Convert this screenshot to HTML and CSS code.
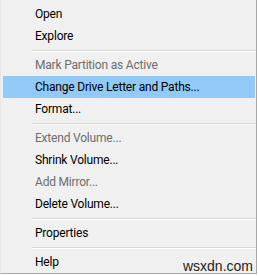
FILE: index.html
```html
<!DOCTYPE html>
<html lang="en">
<head>
    <meta charset="UTF-8">
    <title>Volume context menu</title>
    <link rel="stylesheet" href="styles.css">
</head>
<body>
    <div class="menu">
        <div class="menu-item">Open</div>
        <div class="menu-item">Explore</div>
        <div class="separator"></div>
        <div class="menu-item disabled">Mark Partition as Active</div>
        <div class="menu-item active">Change Drive Letter and Paths...</div>
        <div class="menu-item">Format...</div>
        <div class="separator"></div>
        <div class="menu-item disabled">Extend Volume...</div>
        <div class="menu-item">Shrink Volume...</div>
        <div class="menu-item disabled">Add Mirror...</div>
        <div class="menu-item">Delete Volume...</div>
        <div class="separator"></div>
        <div class="menu-item">Properties</div>
        <div class="separator"></div>
        <div class="menu-item">Help</div>
    </div>
    <div class="watermark">wsxdn.com</div>
</body>
</html>
```
FILE: styles.css
```css
body {
    margin: 0;
    width: 258px;
    height: 276px;
    background-color: #fff;
    font-family: Roboto, sans-serif;
    position: relative;
    overflow: hidden;
}
.menu {
    width: 257px;
    height: 274px;
    padding: 3px 0 0 2px;
    background-color: #f0f0f0;
    border-left: 1px solid #e8e8e8;
    border-right: 1px solid #a8a8a8;
    border-bottom: 1px solid #a8a8a8;
    box-sizing: border-box;
}
.menu-item {
    height: 22px;
    line-height: 22px;
    padding-left: 32px;
    font-size: 12px;
    letter-spacing: -0.2px;
    color: #000;
    white-space: nowrap;
}
.menu-item.disabled {
    color: #6d6d6d;
}
.menu-item.active {
    background-color: #91c9f7;
    margin-right: 1px;
}
.separator {
    height: 1px;
    margin: 3px 0 2px 29px;
    background-color: #d7d7d7;
    border-bottom: 1px solid #fff;
}
.watermark {
    position: absolute;
    right: 5px;
    bottom: 2px;
    font-family: 'Liberation Sans', sans-serif;
    font-size: 14px;
    color: #222;
}
```
